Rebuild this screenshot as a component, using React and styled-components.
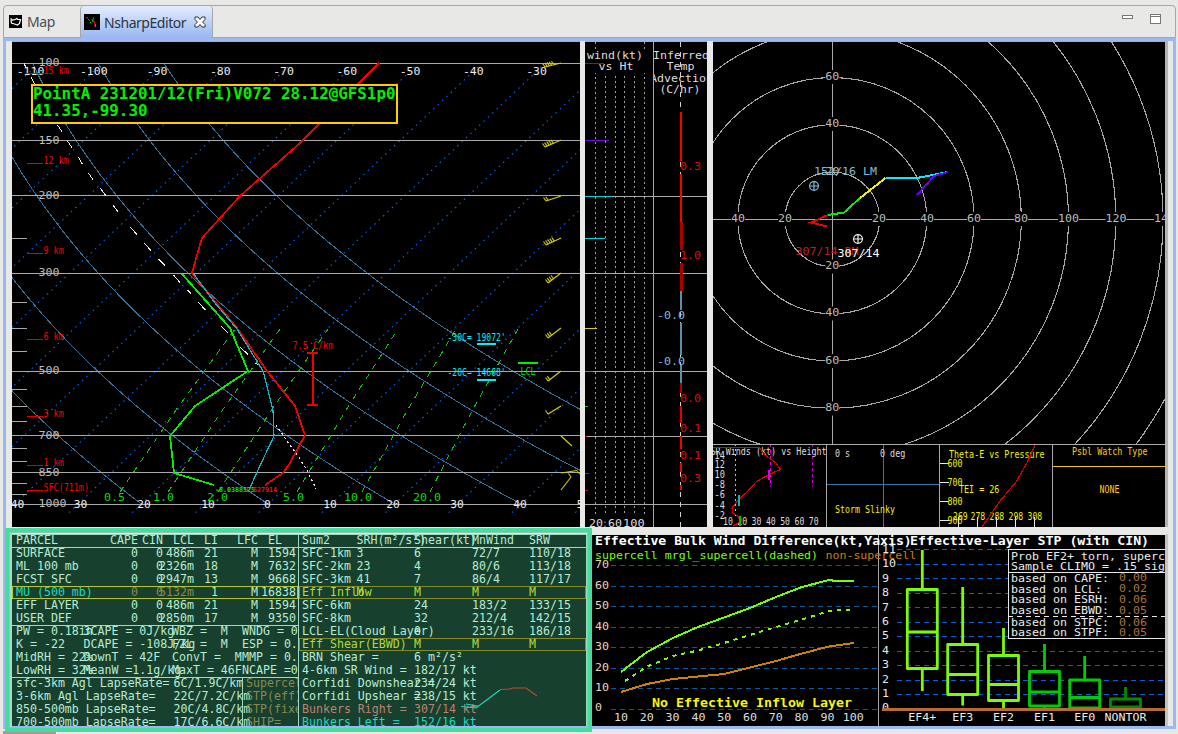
import React from "react";
import styled, { createGlobalStyle } from "styled-components";

const MONO = '"DejaVu Sans Mono", "Liberation Mono", monospace';

const Global = createGlobalStyle`
  * { box-sizing: border-box; }
  body { margin: 0; background: #e8e8e6; overflow: hidden; }
`;

/* ---------- window chrome ---------- */
const Window = styled.div`
  width: 1178px;
  height: 734px;
  display: flex;
  flex-direction: column;
  background: #e8e8e6;
  padding: 5px 2px 0 3px;
  overflow: hidden;
`;
const TabBar = styled.div`
  height: 33px;
  flex: none;
  display: flex;
  border: 1px solid #a6a6a4;
  border-radius: 4px 4px 0 0;
  padding-right: 14px;
`;
const Tab = styled.div`
  display: flex;
  align-items: center;
  width: ${(p) => p.$width}px;
  padding-left: ${(p) => (p.$active ? 3 : 5)}px;
  gap: ${(p) => (p.$active ? 4 : 5)}px;
  font: 15px/20px "Noto Sans", sans-serif;
  letter-spacing: -0.5px;
  color: ${(p) => (p.$active ? "#2a3440" : "#4a4f52")};
  background: ${(p) => (p.$active ? "linear-gradient(#e4edfd, #98b6f2)" : "transparent")};
  border-left: ${(p) => (p.$active ? "1px solid #a6a6a4" : "none")};
  border-right: ${(p) => (p.$active ? "1px solid #a6a6a4" : "none")};
  border-radius: 4px 4px 0 0;
  margin-bottom: ${(p) => (p.$active ? -1 : 0)}px;
`;
const TabText = styled.span`
  display: block;
  width: ${(p) => p.$width}px;
  white-space: nowrap;
  transform: scaleX(0.935);
  transform-origin: left;
  margin-top: -1px;
`;
const WindowButtons = styled.div`
  margin-left: auto;
  display: flex;
  gap: 17px;
  padding-top: 8px;
`;
const Body = styled.div`
  height: 691px;
  flex: none;
  border: 3px solid #9cb8f0;
  padding-left: 6px;
  padding-right: 5px;
  display: flex;
  flex-direction: column;
  gap: 7px;
`;
const TopRow = styled.div`
  display: flex;
  height: 486px;
  flex: none;
`;
const BottomRow = styled.div`
  display: flex;
  height: 192px;
  flex: none;
  gap: 4px;
`;
const Footer = styled.div`
  display: flex;
  height: 5px;
  padding-top: 2px;
`;
const FooterBar = styled.div`
  width: 54px;
  height: 3px;
  background: #9c9c9a;
  border-right: 1px solid #fff;
`;

/* ---------- chart panels ---------- */
const Pane = styled.div`
  position: relative;
  width: ${(p) => p.$width}px;
  margin-right: ${(p) => p.$gap || 0}px;
  height: 100%;
  flex: none;
  background: #000;
  border-top: 1px solid #b0b0ae;
  overflow: hidden;
`;
const ShearPane = styled(Pane)`
  border-top-color: #e4e4e2;
  border-right: 3px solid #c4c4c2;
`;
const Hodo = styled(Pane)`
  border-right: 3px solid #b4b4b2;
  display: flex;
  flex-direction: column;
`;
const Insets = styled.div`
  display: grid;
  grid-template-columns: 114px 113px 113px 1fr;
  height: 83px;
  border-top: 1px solid #a9a9a9;
`;
const Inset = styled.div`
  overflow: hidden;
  border-right: 1px solid #a9a9a9;
  &:last-child { border-right: none; }
`;
const Chart = styled.svg`
  display: block;
  font-family: ${MONO};
`;
const TitleBox = styled.div`
  position: absolute;
  left: 19px;
  top: 42px;
  width: 367px;
  height: 40px;
  border: 2px solid #fc0;
  background: #000;
  color: #00f000;
  font: bold 15.85px/16.5px ${MONO};
  white-space: pre;
`;

function Plot({ x, y, w, h, children }) {
  return (
    <Chart width={w} height={h} viewBox={`${x} ${y} ${w} ${h}`}>
      {children}
    </Chart>
  );
}

/* Monospaced label: y is the middle of the capitals, cw the advance of a character. */
function T({ x, y, c = "#dedede", s = 11.2, cw = 7, b, a = "start", children }) {
  const str = String(children);
  return (
    <text
      x={x}
      y={y + s * 0.35}
      fill={c}
      fontSize={s}
      fontWeight={b ? "bold" : "normal"}
      textAnchor={a}
      textLength={str.length * cw}
      lengthAdjust="spacingAndGlyphs"
      xmlSpace="preserve"
    >
      {str}
    </text>
  );
}
const L = ({ x1, y1, x2, y2, c = "#a9a9a9", w = 1, d }) => (
  <line x1={x1} y1={y1} x2={x2} y2={y2} stroke={c} strokeWidth={w} strokeDasharray={d} shapeRendering="crispEdges" />
);
const P = ({ pts, c, w = 1, d }) => (
  <polyline points={pts} fill="none" stroke={c} strokeWidth={w} strokeDasharray={d} shapeRendering="crispEdges" />
);

/* ---------- skew-T ---------- */
const yOf = (p) => 63 + 441 * Math.log10(p / 100);
const xOf = (t, y) => 268 + 6.33 * t + (504 - y) * 1.06;
const adiabat = (theta) => {
  const out = [];
  for (let p = 100; p <= 1000; p += 10) {
    const t = (theta + 273.15) * Math.pow(p / 1000, 0.286) - 273.15;
    out.push(`${xOf(t, yOf(p)).toFixed(1)},${yOf(p).toFixed(1)}`);
  }
  return out.join(" ");
};
const ISOTHERMS = Array.from({ length: 18 }, (_, i) => -120 + i * 10);
const BOTTOM_TEMPS = [
  ["40", 17.5], ["30", 80.5], ["20", 144], ["10", 208], ["0", 267.5],
  ["10", 330], ["20", 393], ["30", 457], ["40", 520], ["50", 583.5],
];
const PARCEL_DASHES = [
  [24, 63, 26, 68], [31, 77, 35, 85], [57.5, 125, 62.5, 132.5], [67.5, 141, 72.5, 148.5],
  [78.5, 157, 82.5, 164.5], [88.5, 173, 93.5, 180.5], [100.5, 188.5, 106.5, 196.5],
  [113, 205, 118.5, 212.5], [130, 227, 137, 234.5], [144, 243, 151, 250.5], [158.5, 259, 165, 265.5],
  [173.5, 275, 180, 282.5], [187.5, 290, 191, 293.5], [198.5, 302.5, 205.5, 310],
  [221.5, 326.5, 228.5, 333.5], [240.5, 347.5, 248, 354.5], [255.5, 363.5, 259.5, 365],
];
const BARBS = [
  [561, 63, 545, 67, 5], [561, 140, 545, 147, 5], [561, 196, 546, 201, 2], [561, 238, 546, 245, 5],
  [561, 273, 548, 283, 4], [561, 328, 548, 338, 3], [561, 371, 548, 381, 2], [561, 406, 548, 414, 1],
  [561, 436, 572, 446, 0], [561, 473, 577, 470.5, 0], [561, 490, 571, 477, 1],
];
const HEIGHTS = [["15 km", 70], ["12 km", 160], ["9 km", 250], ["6 km", 336], ["3 km", 413], ["1 km", 462], ["SFC(711m)", 487]];
const MIX = [
  ["0.5", 120, 235, 104], ["1.0", 168, 280, 153], ["2.0", 218, 328, 207],
  ["5.0", 297, 398, 283], ["10.0", 362, 456, 344], ["20.0", 430, 518, 413],
];

function SkewT() {
  return (
    <Pane $width={568} $gap={5}>
      <Plot x={12} y={42} w={568} h={485}>
        {ISOTHERMS.map((t) => (
          <line key={t} x1={xOf(t, 67)} y1={67} x2={xOf(t, 513)} y2={513} stroke="#0a64ff" strokeWidth="1.1" strokeDasharray="1.5 4.5" />
        ))}
        {[-20, 0, 20, 40, 60, 80].map((t) => (
          <P key={t} pts={adiabat(t)} c="#3b709a" />
        ))}
        {[100, 150, 200, 300, 500, 700, 850, 1000].map((p) => (
          <g key={p}>
            <L x1={12} y1={Math.floor(yOf(p)) + 0.5} x2={580} y2={Math.floor(yOf(p)) + 0.5} />
            <T x={38.5} y={yOf(p) - 1} c="#bcbcbc">{p}</T>
          </g>
        ))}
        {[250, 350, 400, 450, 550, 600, 650, 750, 800, 900, 950].map((p) => (
          <L key={p} x1={12} y1={yOf(p)} x2={27} y2={yOf(p)} />
        ))}
        {[-110, -100, -90, -80, -70, -60, -50, -40, -30].map((t, i) => (
          <T key={t} x={30.5 + i * 63.25} y={71} a="middle" cw={6.9} c="#ececec">{t}</T>
        ))}
        {BOTTOM_TEMPS.map(([t, x]) => (
          <T key={x} x={x} y={504} a="middle" cw={6.8} c="#ececec">{t}</T>
        ))}
        {MIX.map(([label, xb, xt, lx]) => (
          <g key={label}>
            <P pts={`${xb},492 ${(xb + xt) / 2 - 1.5},410 ${xt},329`} c="#12c012" d="6 6" />
            <T x={lx} y={497.5} c="#10d810" cw={7}>{label}</T>
          </g>
        ))}
        {HEIGHTS.map(([label, y]) => (
          <g key={label}>
            <L x1={27} y1={y + 3.5} x2={43} y2={y + 3.5} c="#e00000" />
            <T x={43.5} y={y} c="#f80000" s={10.2} cw={5.05}>{label}</T>
          </g>
        ))}
        {PARCEL_DASHES.map(([a, b, c, d], i) => (
          <L key={i} x1={a} y1={b} x2={c} y2={d} c="#f0f0f0" />
        ))}
        <P pts="276,425 287,441 300,459 308,472 316,489" c="#e8e8e8" w={1.2} d="2 3" />
        <P pts="379,63 300,143 240,196 202,238 192,273 212,298 237,328 267,371 295,406 305,435 290,463 283,473 265,485" c="#f00000" w={1.8} />
        <P pts="182,274 230,328 248,371 195,406 170,436 174,473 214,485" c="#00f000" w={1.8} />
        <P pts="193,273 215,303 237,329 263,371 273,410 274,436 257,472 249,490" c="#14b8c0" w={1.2} />
        <T x={215} y={489.5} c="#10e010" s={6.8} b cw={4}>-8.0388525</T>
        <T x={245} y={489.5} c="#f01010" s={6.8} b cw={4}>1.527914</T>
        <T x={292.5} y={345} c="#f80000" s={10.2} cw={5.1}>7.5 C/km</T>
        <L x1={312.5} y1={352} x2={312.5} y2={405} c="#f00000" w={2} />
        <L x1={306.5} y1={353} x2={318} y2={353} c="#f00000" w={2} />
        <L x1={306.5} y1={405} x2={318} y2={405} c="#f00000" w={2} />
        <T x={447.5} y={338} c="#00f0f8" s={9.8} cw={4.85}>{"-30C= 19072'"}</T>
        <L x1={476.5} y1={344} x2={496} y2={344} c="#00f0f8" w={2} />
        <T x={447.5} y={373} c="#00f0f8" s={9.8} cw={4.85}>{"-20C= 14668'"}</T>
        <L x1={476.5} y1={380} x2={496} y2={380} c="#00f0f8" w={2} />
        <L x1={517.5} y1={363} x2={538} y2={363} c="#00f000" w={2} />
        <T x={520.5} y={371} c="#00d800" s={10.2} cw={5}>LCL</T>
        {BARBS.map(([x1, y1, x2, y2, n], i) => {
          const len = Math.hypot(x2 - x1, y2 - y1);
          const dx = (x1 - x2) / len;
          const dy = (y1 - y2) / len;
          return (
            <g key={i} stroke="#d8d000" strokeWidth="1.1">
              <line x1={x1} y1={y1} x2={x2} y2={y2} />
              {Array.from({ length: n }, (_, k) => (
                <line key={k} x1={x2 + dx * k * 2.3} y1={y2 + dy * k * 2.3} x2={x2 + dx * k * 2.3 - 2.5} y2={y2 + dy * k * 2.3 - 3.5} />
              ))}
            </g>
          );
        })}
        <path d="M577 470.500l3 4" stroke="#d8d000" />
      </Plot>
      <TitleBox>{"PointA 231201/12(Fri)V072 28.12@GFS1p0\n41.35,-99.30"}</TitleBox>
    </Pane>
  );
}

/* ---------- wind and inferred advection ---------- */
const SPEEDS = [
  [63, 604, "#6a08d8"], [140, 608.5, "#6a08d8"], [196, 612, "#00d0d8"], [238, 604.5, "#00d0d8"],
  [273, 600, "#d8d000"], [328, 597, "#d8d000"], [371, 593, "#00d000"], [406, 587.5, "#00d000"],
  [436, 587, "#e00000"], [473, 589, "#e00000"], [490, 587.5, "#e00000"],
];
const ADVECTION = [
  [112, 161, 681, 2, "#f80000"], [174, 222, 681, 2, "#f80000"], [222, 250, 681.5, 3, "#a80000"],
  [263, 291, 681.5, 3, "#a80000"], [291, 310, 681, 2, "#5a90a8"], [323, 355, 681, 2, "#5a90a8"],
  [365, 383, 681, 2, "#5a90a8"], [383, 393, 681, 2, "#b00000"], [406, 423, 681, 2, "#e00000"],
  [436, 449, 681, 2, "#f80000"], [463, 472, 681, 2, "#f80000"], [485, 490, 681, 2, "#f80000"],
];

function WindPane() {
  return (
    <Pane $width={122} $gap={6}>
      <Plot x={585} y={42} w={122} h={485}>
        {[595.5, 605.5, 615.5, 624.5, 634.5, 644.5].map((x) => (
          <L key={x} x1={x} y1={x > 596 && x < 640 ? 76 : 42} x2={x} y2={516} c="#a0a0a0" d="2 3" />
        ))}
        {[196, 273, 371, 436, 504].map((y) => (
          <L key={y} x1={585} y1={y + 0.5} x2={707} y2={y + 0.5} />
        ))}
        <L x1={653.5} y1={42} x2={653.5} y2={527} />
        <L x1={680.5} y1={42} x2={680.5} y2={527} c="#d0d0d0" d="5 5" />
        {ADVECTION.map(([y1, y2, x, w, c]) => (
          <L key={y1} x1={x} y1={y1} x2={x} y2={y2} c={c} w={w} />
        ))}
        <rect x={587} y={49} width={60} height={24} fill="#000" />
        {SPEEDS.map(([y, x, c]) => (
          <L key={y} x1={585} y1={y + 0.5} x2={x} y2={y + 0.5} c={c} />
        ))}
        <T x={587} y={55.5}>wind(kt)</T>
        <T x={598.5} y={66}>vs Ht</T>
        <T x={653} y={55.5}>Inferred</T>
        <T x={666.5} y={66}>Temp</T>
        <svg x={654} y={70} width={54} height={15} viewBox="654 70 54 15">
          <T x={650} y={78}>Advection</T>
        </svg>
        <T x={659.5} y={89.5} cw={6.8}>(C/hr)</T>
        {[[166.5, "0.3"], [255.5, "1.0"], [398.5, "0.0"], [428.5, "0.1"], [455.5, "0.1"], [478.5, "0.3"]].map(([y, v]) => (
          <T key={y} x={680} y={y} c="#e00808">{v}</T>
        ))}
        <T x={657} y={315.5} c="#80bcd4">-0.0</T>
        <T x={657} y={361.5} c="#80bcd4">-0.0</T>
        <T x={589} y={523} cw={7}>20</T>
        <T x={602} y={523} c="#909090" cw={6}>:</T>
        <T x={608} y={523} cw={7}>60</T>
        <T x={623} y={523} cw={7.2}>100</T>
      </Plot>
    </Pane>
  );
}

/* ---------- hodograph ---------- */
const CX = 832.3;
const CY = 219.3;
function RingLabel({ x, y, children }) {
  const w = String(children).length * 7;
  return (
    <g>
      <rect x={x - w / 2} y={y - 6} width={w} height={14} fill="#000" />
      <T x={x} y={y} a="middle" c="#bcbcbc">{children}</T>
    </g>
  );
}
const Target = ({ x, y, c }) => (
  <g stroke={c} fill="none" strokeWidth="1.2">
    <circle cx={x} cy={y} r={4.4} />
    <path d={`M${x - 4.5} ${y}h9M${x} ${y - 4.5}v9`} />
  </g>
);

function Hodograph() {
  return (
    <Plot x={713} y={42} w={452} h={402}>
      {[1, 2, 3, 4, 5, 6, 7, 8].map((n) => (
        <circle key={n} cx={CX} cy={CY} r={n * 47.25} fill="none" stroke="#a9a9a9" strokeWidth="1.1" shapeRendering="crispEdges" />
      ))}
      <L x1={713} y1={219.5} x2={1165} y2={219.5} />
      <L x1={832.5} y1={42} x2={832.5} y2={444} />
      {[[60, 76], [40, 123], [20, 265.5], [40, 312.5], [60, 360], [80, 407.5]].map(([v, y]) => (
        <RingLabel key={y} x={832.3} y={y}>{v}</RingLabel>
      ))}
      {[[40, 738], [20, 785], [20, 879], [40, 927], [60, 974], [80, 1021], [100, 1068.5], [120, 1116]].map(([v, x]) => (
        <RingLabel key={x} x={x} y={218}>{v}</RingLabel>
      ))}
      <RingLabel x={1164.5} y={218}>140</RingLabel>
      <T x={825.5} y={171} c="#bcbcbc">20</T>
      <P pts="827,226.5 811,222.5 828,215" c="#f00000" w={2} />
      <P pts="828,215 844,212.5 860,198" c="#00f000" w={2} />
      <P pts="860,198 885.5,178" c="#f0f000" w={2} />
      <P pts="885.5,178 917,178 948,172" c="#00f0f8" w={2} />
      <P pts="948,172 934,176 917,195" c="#6a00f0" w={2} />
      <T x={795.5} y={251} c="#b82020">307/14 RM</T>
      <T x={814} y={171} c="#80bcd4">152/16 LM</T>
      <Target x={814} y={186} c="#80bcd4" />
      <T x={837.5} y={253} c="#fff">307/14</T>
      <Target x={858} y={239} c="#f0f0f0" />
    </Plot>
  );
}

function SRWinds() {
  return (
    <Plot x={713} y={445} w={113} h={82}>
      <L x1={735.5} y1={444} x2={735.5} y2={516} d="2 3" c="#c0c0c0" />
      <L x1={770.5} y1={444} x2={770.5} y2={487} d="3 3" c="#e000e0" />
      <L x1={812.5} y1={444} x2={812.5} y2={487} d="3 3" c="#c000c8" />
      <T x={710.5} y={451.5} s={10} cw={5.05}>SR Winds (kt) vs Height</T>
      {[["14", 455], ["12", 464.5], ["10", 474.5], ["-8", 484.5], ["-6", 494.5], ["-4", 505], ["-2", 515.5]].map(([v, y]) => (
        <T key={v} x={714.5} y={y} s={10} cw={5.2}>{v}</T>
      ))}
      {["10", "20", "30", "40", "50", "60", "70"].map((v, i) => (
        <T key={v} x={723 + i * 14.3} y={521.5} s={10} cw={4.9}>{v}</T>
      ))}
      <P pts="713,447.5 759,447.5 765,455 776,463 780.5,469.5 768,475 756,482 747,492 738,500 732,508 733,513 743,520 733,526" c="#d80000" w={1.2} />
      <L x1={768.5} y1={470} x2={768.5} y2={480} c="#e000e0" w={2} />
      <L x1={738.5} y1={495} x2={738.5} y2={506} c="#00b8b8" w={2} />
      <L x1={739.5} y1={516} x2={739.5} y2={526} c="#00c000" w={2} />
    </Plot>
  );
}
function StormSlinky() {
  return (
    <Plot x={827} y={445} w={112} h={82}>
      <L x1={826} y1={484.5} x2={940} y2={484.5} c="#3878a8" />
      <L x1={883.5} y1={445} x2={883.5} y2={527} c="#3878a8" />
      <T x={835} y={453} s={10} cw={5}>0 s</T>
      <T x={880} y={453} s={10} cw={5.05}>0 deg</T>
      <T x={835} y={509.5} c="#f0f000" s={10.4} cw={5}>Storm Slinky</T>
    </Plot>
  );
}
function ThetaE() {
  return (
    <Plot x={940} y={445} w={112} h={82}>
      {[["600", 463.5], ["700", 482.5], ["800", 501.5], ["900", 520.5]].map(([v, y]) => (
        <g key={v}>
          <L x1={939} y1={y} x2={949} y2={y} c="#e8e8e8" />
          <T x={947.5} y={y} c="#f0f000" s={10.2} cw={5}>{v}</T>
        </g>
      ))}
      {[958.5, 977.5, 996.5, 1015.5, 1034.5].map((x, i) => (
        <g key={x}>
          <L x1={x} y1={517} x2={x} y2={527} c="#e8e8e8" />
          <T x={[953, 970.5, 989.5, 1008.5, 1027.5][i]} y={516} c="#f0f000" s={10.2} cw={4.9}>{["269", "278", "288", "298", "308"][i]}</T>
        </g>
      ))}
      <T x={949} y={454} c="#f0f000" s={10.2} cw={5.03}>Theta-E vs Pressure</T>
      <T x={959} y={489} c="#f8f000" s={10.4} cw={5.05}>TEI = 26</T>
      <P pts="1035,445 1027,463 1016,482 1000,501 982,527" c="#d80000" w={1.2} />
    </Plot>
  );
}
function WatchType() {
  return (
    <Plot x={1053} y={445} w={112} h={82}>
      <T x={1072} y={451} c="#f4d000" s={10.2} cw={5.03}>Psbl Watch Type</T>
      <L x1={1052} y1={466.5} x2={1165} y2={466.5} c="#f0c800" />
      <T x={1099.5} y={489} c="#f8d000" s={10.4} cw={5}>NONE</T>
    </Plot>
  );
}

/* ---------- summary tables ---------- */
const INK = "#b8ecd2";
const LINE = "#9fd9bf";
const Summary = styled.div`
  position: relative;
  width: 576px;
  height: 192px;
  flex: none;
  display: flex;
  background: #17402f;
  color: ${INK};
  font: 11.6px/12px ${MONO};
  border-top: 1px solid ${LINE};
`;
const SelectionFrame = styled.div`
  position: absolute;
  inset: -7px -4px -6px -7px;
  border: 4px solid #48dba0;
  box-shadow: inset 0 0 0 1px #8fc8ae, inset 2px 0 0 1px #a9d8c4;
`;
const ParcelTable = styled.div`
  width: 287px;
  height: 191px;
  overflow: hidden;
  border-right: 1px solid ${LINE};
`;
const SumTable = styled.div`
  position: relative;
  flex: 1;
  height: 191px;
  overflow: hidden;
  border-right: 2px solid ${LINE};
`;
const Row = styled.div`
  height: ${(p) => p.$h || 13}px;
  line-height: ${(p) => (p.$h ? 10 : 12)}px;
  padding-left: ${(p) => p.$pad ?? 4}px;
  display: grid;
  grid-template-columns: ${(p) => p.$cols};
  white-space: pre;
  box-shadow: ${(p) =>
    p.$box ? `inset 0 0 0 1px ${p.$box}` : p.$rule ? `inset 0 1px 0 ${LINE}` : "none"};
  color: ${(p) => p.$color || "inherit"};
`;
const Cell = styled.span`
  display: flex;
  min-width: 0;
  justify-content: ${(p) => (p.$left ? "flex-start" : "flex-end")};
  padding-right: ${(p) => p.$pr || 0}px;
  padding-left: ${(p) => p.$pl || 0}px;
  color: ${(p) => p.$color || "inherit"};
  border-left: ${(p) => (p.$edge ? `1px solid ${LINE}` : "none")};
`;
const MiniHodo = styled.svg`
  position: absolute;
  left: 160px;
  top: 148px;
`;

const PARCEL_COLS = "86px 36px 25px 31px 24px 40px 38px";
const INDEX_COLS = "67.5px 88.5px 70px 1fr";
const LAPSE_COLS = "157.5px 68.5px 1fr";
const SUM_COLS = "54.5px 57.5px 58px 57px 1fr";
const PARCELS = [
  ["SURFACE", "0", "0", "486m", "21", "M", "1594"],
  ["ML 100 mb", "0", "0", "2326m", "18", "M", "7632"],
  ["FCST SFC", "0", "0", "2947m", "13", "M", "9668"],
  ["MU (500 mb)", "0", "0", "5132m", "1", "M", "16838"],
  ["EFF LAYER", "0", "0", "486m", "21", "M", "1594"],
  ["USER DEF", "0", "0", "2850m", "17", "M", "9350"],
];
const INDICES = [
  ["PW = 0.18in", "3CAPE = 0J/kg", "WBZ =  M", "WNDG = 0.0"],
  ["K = -22", "DCAPE = -108J/kg", "FZL =  M", "ESP = 0.0"],
  ["MidRH = 22%", "DownT = 42F", "ConvT =  M", "MMP = 0.0"],
  ["LowRH = 32%", "MeanW =1.1g/kg", "MaxT = 46F", "NCAPE =0.0"],
];
const LAPSES = [
  ["sfc-3km Agl LapseRate=", "6C/1.9C/km", "Supercell="],
  ["3-6km Agl LapseRate=", "22C/7.2C/km", "STP(eff)="],
  ["850-500mb LapseRate=", "20C/4.8C/km", "STP(fixed)="],
  ["700-500mb LapseRate=", "17C/6.6C/km", "SHIP="],
];
const YEL = "#b2dd2e";
const SUMS = [
  ["SFC-1km", "3", "6", "72/7", "110/18"],
  ["SFC-2km", "23", "4", "80/6", "113/18"],
  ["SFC-3km", "41", "7", "86/4", "117/17"],
  ["Eff Inflow", "M", "M", "M", "M"],
  ["SFC-6km", "", "24", "183/2", "133/15"],
  ["SFC-8km", "", "32", "212/4", "142/15"],
  ["LCL-EL(Cloud Layer)", "", "0", "233/16", "186/18"],
  ["Eff Shear(EBWD)", "", "M", "M", "M"],
  ["BRN Shear =", "", "6 m²/s²", "", ""],
  ["4-6km SR Wind =", "", "182/17 kt", "", ""],
  ["Corfidi Downshear =", "", "234/24 kt", "", ""],
  ["Corfidi Upshear =", "", "238/15 kt", "", ""],
  ["Bunkers Right =", "", "307/14 kt", "", ""],
  ["Bunkers Left =", "", "152/16 kt", "", ""],
];
const sumColor = (i) => (i === 3 || i === 7 ? YEL : i === 12 ? "#bd8270" : i === 13 ? "#18dcc4" : undefined);

function SummaryPanel() {
  return (
    <Summary>
      <ParcelTable>
        <Row $cols={PARCEL_COLS} $h={11.5}>
          <Cell $left>PARCEL</Cell>
          <Cell>CAPE</Cell>
          <Cell>CIN</Cell>
          <Cell>LCL</Cell>
          <Cell>LI</Cell>
          <Cell>LFC</Cell>
          <Cell $pr={14}>EL</Cell>
        </Row>
        {PARCELS.map((r, i) => (
          <Row key={i} $cols={PARCEL_COLS} $rule={i === 0} $box={i === 3 ? "#b3c42c" : null}>
            {r.map((v, k) => (
              <Cell key={k} $left={k === 0} $color={i === 3 && (k === 0 ? "#18dcc4" : k < 4 ? "#8a8a50" : null)}>{v}</Cell>
            ))}
          </Row>
        ))}
        {INDICES.map((r, i) => (
          <Row key={i} $cols={INDEX_COLS} $rule={i === 0}>
            {r.map((v, k) => <Cell key={k} $left>{v}</Cell>)}
          </Row>
        ))}
        {LAPSES.map((r, i) => (
          <Row key={i} $cols={LAPSE_COLS} $rule={i === 0}>
            <Cell $left>{r[0]}</Cell>
            <Cell $left>{r[1]}</Cell>
            <Cell $left $edge $pl={3} $color="#8a8a50">{r[2]}</Cell>
          </Row>
        ))}
      </ParcelTable>
      <SumTable>
        <Row $cols={SUM_COLS} $pad={3} $h={11.5}>
          {["Sum2", "SRH(m²/s²)", "Shear(kt)", "MnWind", "SRW"].map((v) => <Cell key={v} $left>{v}</Cell>)}
        </Row>
        {SUMS.map((r, i) => (
          <Row key={i} $cols={SUM_COLS} $pad={3} $rule={i === 0} $color={sumColor(i)} $box={i === 3 || i === 7 ? "#838c22" : null}>
            {r.map((v, k) => <Cell key={k} $left>{v}</Cell>)}
          </Row>
        ))}
        <MiniHodo width="80" height="28" viewBox="459 683 80 28" fill="none" strokeWidth="1.1">
          <path d="M461 706.5l15 1.5l2-2l-12-2M461 706.5l15 1.5l24-18" stroke="#18dcc4" />
          <path d="M500 689.5l10-.5l3-1h13l11 8" stroke="#bd4a30" />
        </MiniHodo>
      </SumTable>
      <SelectionFrame />
    </Summary>
  );
}

/* ---------- effective shear and STP charts ---------- */
const BOXES = [
  ["EF4+", 922.3, 589.5, 668.5, 632, 550, 691, "#7cfc00"],
  ["EF3", 962.7, 644.5, 694.5, 674.5, 587, 705.5, "#7cfc00"],
  ["EF2", 1003.5, 655.5, 700.5, 684.5, 628, 708, "#7cfc00"],
  ["EF1", 1044.5, 671.5, 706, 692, 644, 708, "#00cd00"],
  ["EF0", 1084.7, 680, 708, 697.5, 656, 708, "#00cd00"],
  ["NONTOR", 1125.5, 699, 708, 707, 687, 708, "#008b00"],
];
const PROBS = [
  ["CAPE:", "0.00", 578], ["LCL:", "0.02", 589], ["ESRH:", "0.06", 599.5],
  ["EBWD:", "0.05", 610.5], ["STPC:", "0.06", 622.5], ["STPF:", "0.05", 632.5],
];

function ShearCharts() {
  return (
    <Plot x={592} y={535} w={573} h={191}>
      {[0, 1, 2, 3, 4, 5, 6, 7].map((n) => (
        <g key={n}>
          <L x1={611} y1={Math.round(708.8 - n * 20.55) + 0.5} x2={877} y2={Math.round(708.8 - n * 20.55) + 0.5} c="#10589a" d="5 4" />
          <T x={595} y={707.5 - n * 20.45} c="#e8d4b8">{n * 10}</T>
        </g>
      ))}
      {[10, 20, 30, 40, 50, 60, 70, 80, 90, 100].map((v, i) => (
        <T key={v} x={621 + i * 25.8} y={717.5} a="middle">{v}</T>
      ))}
      <P pts="621,672 647,652 673,638 698,627 724,617.5 750,608 776,597 802,587 829,580 836,581 854,581" c="#7cfc00" w={2} />
      <P pts="625,681 647,666.5 673,656 698,650.5 724,643 750,635 776,627 802,619.5 829,611 854,609.5" c="#7cfc00" w={2} d="4 5" />
      <P pts="621,692 647,684 673,679 698,676.5 724,674 750,667.5 776,661 802,653.5 829,646.5 854,643" c="#cd8500" w={2} />
      <T x={652} y={703} c="#f8f800" b s={12.8} cw={8}>No Effective Inflow Layer</T>
      <L x1={878.5} y1={534} x2={878.5} y2={726} />
      {Array.from({ length: 12 }, (_, n) => (
        <g key={n}>
          <T x={882} y={707.5 - n * 14.4} c="#e8e8e8">{n}</T>
          <L x1={897} y1={Math.round(709 - n * 14.55) + 0.5} x2={1165} y2={Math.round(709 - n * 14.55) + 0.5} c="#0a5cd8" d="5 4" />
        </g>
      ))}
      {BOXES.map(([name, cx, top, bot, med, hi, lo, c]) => (
        <g key={name} stroke={c} strokeWidth="2.800" fill="none">
          <path d={`M${cx} ${hi}V${top}M${cx} ${bot}V${lo}M${cx - 15} ${med}h30`} />
          <rect x={cx - 15} y={top} width={30} height={bot - top} strokeLinejoin="round" />
        </g>
      ))}
      {BOXES.map(([name, cx]) => (
        <T key={name} x={cx} y={717.5} a="middle" c="#ececec">{name}</T>
      ))}
      <L x1={882} y1={709.5} x2={1166} y2={709.5} c="#b86c30" w={3} />
      <rect x={1008.5} y={549.5} width={160} height={89} fill="#000" stroke="#e8e8e8" />
      <L x1={1008} y1={572.5} x2={1165} y2={572.5} c="#e8e8e8" />
      <L x1={1008} y1={616.5} x2={1165} y2={616.5} c="#e8e8e8" d="5 4" />
      <T x={1011} y={556.5} c="#ececec">Prob EF2+ torn, supercell</T>
      <T x={1011} y={566.5} c="#ececec">Sample CLIMO = .15 sigtor</T>
      {PROBS.map(([k, v, y]) => (
        <g key={k}>
          <T x={1011} y={y} c="#ececec">{`based on ${k}`}</T>
          <T x={1119} y={y - 0.7} c="#a8703c">{v}</T>
        </g>
      ))}
      <T x={595} y={555.5} c="#7cfc00" s={11} cw={6.97}>supercell mrgl_supercell(dashed)</T>
      <T x={825.5} y={555.5} c="#c88000" s={11} cw={6.97}>non-supercell</T>
      <T x={595} y={541} c="#fff" b s={12.8} cw={7.92}>Effective Bulk Wind Difference(kt,Yaxis)</T>
      <T x={910} y={541} c="#fff" b s={12.8} cw={7.97}>Effective-Layer STP (with CIN)</T>
    </Plot>
  );
}

const MapIcon = () => (
  <svg width="13" height="13" viewBox="0 0 13 13">
    <rect width="13" height="13" fill="#000" />
    <path d="M1.500 3.500l2 1.500 3-.5 2-1.500M8 4.500h3.500l-1 4-2 1.500-3-1-3-1-.5-3" fill="none" stroke="#fff" strokeWidth="1.200" />
  </svg>
);
const SoundingIcon = () => (
  <svg width="16" height="16" viewBox="0 0 16 16">
    <rect width="16" height="16" fill="#000" />
    <path d="M2.500 3l3 3.500 1.500 3" fill="none" stroke="#00e000" strokeDasharray="2 1" />
    <path d="M9.500 3v4l1.500 2v3.500" fill="none" stroke="#f00000" strokeWidth="1.300" />
    <path d="M8 5l1 3M11.500 10v3" stroke="#00c000" />
  </svg>
);

export default function App() {
  return (
    <Window>
      <Global />
      <TabBar>
        <Tab $width={76}>
          <MapIcon />
          <TabText $width={40}>Map</TabText>
        </Tab>
        <Tab $width={133} $active>
          <SoundingIcon />
          <TabText $width={86}>NsharpEditor</TabText>
          <svg width="12" height="12" viewBox="0 0 12 12">
            <path d="M1 1h3l2 2.500 2-2.500h3v2.500l-2.500 2.500 2.500 2.500v2.500h-3l-2-2.500-2 2.500h-3v-2.500l2.500-2.500-2.500-2.500z" fill="#fff" stroke="#333" />
          </svg>
        </Tab>
        <WindowButtons>
          <svg width="11" height="12" viewBox="0 0 11 12">
            <rect x=".5" y="1.500" width="10" height="3" fill="#fff" stroke="#777" />
          </svg>
          <svg width="11" height="12" viewBox="0 0 11 12">
            <rect x=".5" y=".5" width="10" height="9" fill="#fff" stroke="#777" />
            <path d="M0 2.500h11" stroke="#777" />
          </svg>
        </WindowButtons>
      </TabBar>
      <Body>
        <TopRow>
          <SkewT />
          <WindPane />
          <Hodo $width={455}>
            <Hodograph />
            <Insets>
              <Inset><SRWinds /></Inset>
              <Inset><StormSlinky /></Inset>
              <Inset><ThetaE /></Inset>
              <Inset><WatchType /></Inset>
            </Insets>
          </Hodo>
        </TopRow>
        <BottomRow>
          <SummaryPanel />
          <ShearPane $width={576}><ShearCharts /></ShearPane>
        </BottomRow>
      </Body>
      <Footer><FooterBar /></Footer>
    </Window>
  );
}
